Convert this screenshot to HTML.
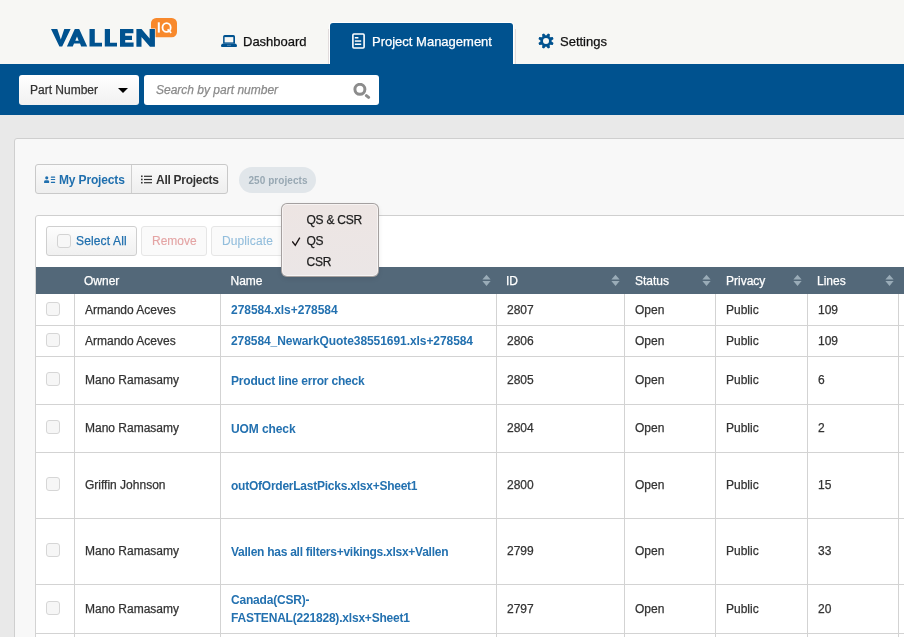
<!DOCTYPE html>
<html><head><meta charset="utf-8">
<style>
*{box-sizing:border-box;margin:0;padding:0}
html,body{width:904px;height:637px;overflow:hidden}
body{font-family:"Liberation Sans",sans-serif;background:#e9e9e9;position:relative;color:#333}
#wrap{position:absolute;left:0;top:0;width:904px;height:637px;will-change:transform;-webkit-text-stroke:0.25px}
.abs{position:absolute}
#top{left:0;top:0;width:904px;height:64px;background:#f7f7f4}
#logo{left:0;top:0}
.tab{position:absolute;top:23px;height:41px;font-size:13px;color:#111;white-space:nowrap}
.tab .t{position:absolute;top:11px}
#t2{left:330px;width:183px;background:#00528f;border-radius:3px 3px 0 0;color:#fff;box-shadow:0 0 0 1px #fff}
#sep1{left:328px;top:29px;width:1px;height:35px;background:#e2dcdc}
#sep2{left:515px;top:29px;width:1px;height:35px;background:#e2dcdc}
#bar{left:0;top:64px;width:904px;height:51px;background:#00528f}
#sel{left:19px;top:75px;width:120px;height:30px;background:linear-gradient(#fff,#f1f1f1);border-radius:3px;font-size:12px;color:#333}
#sel .t{position:absolute;left:11px;top:8px}
#sel .caret{position:absolute;left:118px;top:88px}
#search{left:144px;top:75px;width:235px;height:30px;background:#fff;border-radius:3px;font-size:12px;font-style:italic;color:#8a8a8a}
#search .t{position:absolute;left:12px;top:8px}
#panel{left:14px;top:138px;width:1000px;height:600px;background:#f8f8f8;border:1px solid #cfcfcf;border-radius:3px}
#bg{left:35px;top:164px;width:193px;height:30px;border:1px solid #c9c9c9;border-radius:3px;background:linear-gradient(#fafafa,#eeeeee);font-size:12px;font-weight:bold}
#bg .d{position:absolute;left:95px;top:0;width:1px;height:28px;background:#cfcfcf}
#badge{left:239px;top:167px;width:77px;height:26px;border-radius:13px;background:#e1e6ea;color:#98a8b3;font-size:10px;font-weight:bold;text-align:center;line-height:28px;letter-spacing:0.07px;padding-left:1px}
#box{left:35px;top:215px;width:1000px;height:500px;background:#fff;border:1px solid #cfcfcf;border-radius:3px}
.btn{position:absolute;top:226px;height:30px;border:1px solid #cfcfcf;border-radius:3px;background:linear-gradient(#fdfdfd,#f0f0f0);font-size:12px}
#thead{left:35px;top:267px;width:900px;height:27px;background:#536879;color:#fff;font-size:12px}
.cell{position:absolute;font-size:12px;color:#333;white-space:nowrap}
.row .c.lnk{color:#2371b0;font-weight:bold;letter-spacing:-0.1px}
.hl{position:absolute;left:35px;width:880px;height:1px;background:#d3d3d3}
.vl{position:absolute;top:294px;width:1px;height:343px;background:#d3d3d3}
.cb{position:absolute;left:46px;width:14px;height:14px;border:1px solid #d6d6d6;border-radius:3px;background:#f6f6f6}
.sort{position:absolute;top:274px}
#pop{left:281px;top:203px;width:98px;height:74px;background:linear-gradient(#ede5e3,#ebe6e6);border:1px solid rgba(0,0,0,.3);border-radius:6px;font-size:12px;color:#1d1d1d;box-shadow:inset 0 0 0 1px rgba(255,255,255,.55),0 2px 5px rgba(0,0,0,.08)}
.row{position:absolute;left:35px;width:880px;display:flex;align-items:center}
.row .c{position:absolute;font-size:12px;color:#333;white-space:nowrap;line-height:18px}
.row .cb{left:11px;position:absolute;margin-top:-2px}

#bg span,#badge,.row .c.lnk{-webkit-text-stroke:0}
</style></head><body><div id="wrap">
<div id="top" class="abs"></div>
<svg id="logo" class="abs" width="200" height="64" viewBox="0 0 200 64">
  <g fill="#00528f">
    <polygon points="51,29 57.3,29 60.8,39.5 64.3,29 70.6,29 62.2,46.5 59.4,46.5"/>
    <path d="M66.9,46.5 L74.8,29 L79.2,29 L87.2,46.5 L81.2,46.5 L80,43.6 L74,43.6 L72.8,46.5 Z M75.3,40.8 L78.7,40.8 L77,36.6 Z" fill-rule="evenodd"/>
    <polygon points="89.5,29 94.8,29 94.8,42.8 102,42.8 102,46.5 89.5,46.5"/>
    <polygon points="104.8,29 110,29 110,42.8 117,42.8 117,46.5 104.8,46.5"/>
    <polygon points="120,29 133.4,29 133.4,33.3 125.2,33.3 125.2,35.8 132,35.8 132,40 125.2,40 125.2,42.6 133.6,42.6 133.6,46.7 120,46.7"/>
  </g>
  <rect x="151" y="17.9" width="26" height="19.4" rx="5.2" fill="#f8892c"/>
  <polygon points="136.4,29 141.5,29 149.6,38.5 149.6,29 154.9,29 154.9,46.7 150,46.7 141.5,37 141.5,46.7 136.4,46.7" fill="#00528f" stroke="#f7f7f4" stroke-width="1.2"/><polygon points="136.4,29 141.5,29 149.6,38.5 149.6,29 154.9,29 154.9,46.7 150,46.7 141.5,37 141.5,46.7 136.4,46.7" fill="#00528f"/>
  <rect x="157.8" y="22.3" width="2" height="10.3" fill="#fff"/><ellipse cx="166.6" cy="27.5" rx="4.1" ry="4.4" fill="none" stroke="#fff" stroke-width="1.8"/><line x1="167.6" y1="29.3" x2="171.2" y2="32.8" stroke="#fff" stroke-width="1.7"/>
</svg>

<div class="tab" style="left:214px;width:110px">
  <svg class="abs" style="left:7px;top:12px" width="16" height="12" viewBox="0 0 16 12"><path d="M2.1,8.8 V1.6 Q2.1,0 3.7,0 H12.4 Q14,0 14,1.6 V8.8 Z" fill="#00528f"/><rect x="3.6" y="2.1" width="8.7" height="5.3" fill="#f7f7f4"/><path d="M0.9,8.8 H15.1 L16,10.6 V11 Q16,11.9 15,11.9 H1 Q0,11.9 0,11 V10.6 Z" fill="#00528f"/><rect x="6" y="9.8" width="4" height="0.9" fill="#5a8ab5"/></svg>
  <span class="t" style="left:29px">Dashboard</span>
</div>
<div id="sep1" class="abs"></div>
<div id="t2" class="tab">
  <svg class="abs" style="left:21px;top:10px" width="14" height="16" viewBox="0 0 14 16"><rect x="1.9" y="1" width="11.2" height="14" rx="1" fill="none" stroke="#fff" stroke-width="1.6"/><rect x="3.8" y="4" width="3.6" height="1.5" fill="#fff"/><rect x="3.8" y="7.3" width="6.4" height="1.5" fill="#fff"/><rect x="3.8" y="10.5" width="6.4" height="1.5" fill="#fff"/></svg>
  <span class="t" style="left:42px">Project Management</span>
</div>
<div id="sep2" class="abs"></div>
<div class="tab" style="left:530px;width:100px">
  <svg class="abs" style="left:8px;top:10px" width="16" height="16" viewBox="0 0 16 16"><path d="M8.18,2.60 L10.04,0.47 L11.88,1.24 L11.69,4.06 L11.94,4.31 L14.76,4.12 L15.53,5.96 L13.40,7.82 L13.40,8.18 L15.53,10.04 L14.76,11.88 L11.94,11.69 L11.69,11.94 L11.88,14.76 L10.04,15.53 L8.18,13.40 L7.82,13.40 L5.96,15.53 L4.12,14.76 L4.31,11.94 L4.06,11.69 L1.24,11.88 L0.47,10.04 L2.60,8.18 L2.60,7.82 L0.47,5.96 L1.24,4.12 L4.06,4.31 L4.31,4.06 L4.12,1.24 L5.96,0.47 L7.82,2.60 Z M11,8 A3,3 0 1,0 5,8 A3,3 0 1,0 11,8 Z" fill="#00528f" fill-rule="evenodd"/></svg>
  <span class="t" style="left:30px">Settings</span>
</div>

<div id="bar" class="abs"></div>
<div id="sel" class="abs"><span class="t">Part Number</span>
  <svg class="abs" style="left:99px;top:13px" width="10" height="5"><polygon points="0,0 10,0 5,5" fill="#000"/></svg>
</div>
<div id="search" class="abs"><span class="t">Search by part number</span>
  <svg class="abs" style="left:209px;top:8px" width="18" height="16" viewBox="0 0 18 16"><circle cx="6.9" cy="6.3" r="5" fill="none" stroke="#8c8c8c" stroke-width="3"/><line x1="13.4" y1="12.6" x2="15.6" y2="14.4" stroke="#8c8c8c" stroke-width="3" stroke-linecap="round"/></svg>
</div>

<div id="panel" class="abs"></div>
<div id="bg" class="abs">
  <svg class="abs" style="left:8px;top:11px" width="12" height="8" viewBox="0 0 12 8"><g fill="#1f6fae"><circle cx="2.75" cy="1.85" r="1.55"/><path d="M0.1,6.9 V5.6 Q0.1,4.2 1.6,4.2 H3.6 Q5.1,4.2 5.1,5.6 V6.9 Z"/><rect x="6.8" y="0.6" width="4.4" height="1.2" rx="0.4"/><rect x="6.8" y="2.9" width="4.4" height="1.2" rx="0.4"/><rect x="6.8" y="5.8" width="4.4" height="1.2" rx="0.4"/></g></svg>
  <span class="abs" style="left:23px;top:8px;color:#1f6fae;letter-spacing:-0.15px">My Projects</span>
  <div class="d"></div>
  <svg class="abs" style="left:105px;top:10px" width="11" height="9" viewBox="0 0 11 9"><g fill="#333"><rect x="0" y="0.5" width="1.6" height="1.6"/><rect x="0" y="3.7" width="1.6" height="1.6"/><rect x="0" y="6.9" width="1.6" height="1.6"/><rect x="3" y="0.7" width="8" height="1.2"/><rect x="3" y="3.9" width="8" height="1.2"/><rect x="3" y="7.1" width="8" height="1.2"/></g></svg>
  <span class="abs" style="left:120px;top:8px;color:#333;letter-spacing:-0.28px">All Projects</span>
</div>
<div id="badge" class="abs">250 projects</div>

<div id="box" class="abs"></div>
<div class="btn" style="left:46px;width:91px">
  <div class="abs" style="left:10px;top:7px;width:14px;height:14px;border:1px solid #d3d3d3;border-radius:3px;background:#f7f7f7"></div>
  <span class="abs" style="left:29px;top:7px;color:#1f6fae;letter-spacing:0.15px">Select All</span>
</div>
<div class="btn" style="left:141px;width:66px;border-color:#e6e6e6;background:#fafafa">
  <span class="abs" style="left:10px;top:7px;color:#e4a4a4;-webkit-text-stroke:0.1px">Remove</span>
</div>
<div class="btn" style="left:211px;width:80px;border-color:#e6e6e6;background:#fafafa">
  <span class="abs" style="left:10px;top:7px;color:#93bedc;-webkit-text-stroke:0.1px;letter-spacing:0.1px">Duplicate</span>
</div>

<div id="thead" class="abs">
  <span class="abs" style="left:49px;top:7px">Owner</span>
  <span class="abs" style="left:195.5px;top:7px">Name</span>
  <span class="abs" style="left:471px;top:7px">ID</span>
  <span class="abs" style="left:600px;top:7px">Status</span>
  <span class="abs" style="left:691px;top:7px">Privacy</span>
  <span class="abs" style="left:782px;top:7px">Lines</span>
</div>
<div class="row" style="top:294px;height:31px;padding-bottom:0px">
<div class="cb"></div>
<span class="c" style="left:50px">Armando Aceves</span>
<span class="c lnk" style="left:196px;letter-spacing:-0.03px;margin-top:0px">278584.xls+278584</span>
<span class="c" style="left:472px">2807</span>
<span class="c" style="left:600px">Open</span>
<span class="c" style="left:691px">Public</span>
<span class="c" style="left:783px">109</span>
</div>
<div class="hl" style="top:325px"></div>
<div class="row" style="top:326px;height:30px;padding-bottom:0px">
<div class="cb"></div>
<span class="c" style="left:50px">Armando Aceves</span>
<span class="c lnk" style="left:196px;letter-spacing:-0.07px;margin-top:0px">278584_NewarkQuote38551691.xls+278584</span>
<span class="c" style="left:472px">2806</span>
<span class="c" style="left:600px">Open</span>
<span class="c" style="left:691px">Public</span>
<span class="c" style="left:783px">109</span>
</div>
<div class="hl" style="top:356px"></div>
<div class="row" style="top:357px;height:47px;padding-bottom:2px">
<div class="cb"></div>
<span class="c" style="left:50px">Mano Ramasamy</span>
<span class="c lnk" style="left:196px;letter-spacing:-0.19px;margin-top:2px">Product line error check</span>
<span class="c" style="left:472px">2805</span>
<span class="c" style="left:600px">Open</span>
<span class="c" style="left:691px">Public</span>
<span class="c" style="left:783px">6</span>
</div>
<div class="hl" style="top:404px"></div>
<div class="row" style="top:405px;height:47px;padding-bottom:2px">
<div class="cb"></div>
<span class="c" style="left:50px">Mano Ramasamy</span>
<span class="c lnk" style="left:196px;letter-spacing:-0.1px;margin-top:2px">UOM check</span>
<span class="c" style="left:472px">2804</span>
<span class="c" style="left:600px">Open</span>
<span class="c" style="left:691px">Public</span>
<span class="c" style="left:783px">2</span>
</div>
<div class="hl" style="top:452px"></div>
<div class="row" style="top:453px;height:65px;padding-bottom:2px">
<div class="cb"></div>
<span class="c" style="left:50px">Griffin Johnson</span>
<span class="c lnk" style="left:196px;letter-spacing:-0.24px;margin-top:2px">outOfOrderLastPicks.xlsx+Sheet1</span>
<span class="c" style="left:472px">2800</span>
<span class="c" style="left:600px">Open</span>
<span class="c" style="left:691px">Public</span>
<span class="c" style="left:783px">15</span>
</div>
<div class="hl" style="top:518px"></div>
<div class="row" style="top:519px;height:65px;padding-bottom:2px">
<div class="cb"></div>
<span class="c" style="left:50px">Mano Ramasamy</span>
<span class="c lnk" style="left:196px;letter-spacing:-0.26px;margin-top:2px">Vallen has all filters+vikings.xlsx+Vallen</span>
<span class="c" style="left:472px">2799</span>
<span class="c" style="left:600px">Open</span>
<span class="c" style="left:691px">Public</span>
<span class="c" style="left:783px">33</span>
</div>
<div class="hl" style="top:584px"></div>
<div class="row" style="top:585px;height:48px;padding-bottom:0px">
<div class="cb"></div>
<span class="c" style="left:50px">Mano Ramasamy</span>
<span class="c lnk" style="left:196px;letter-spacing:-0.2px;margin-top:0px">Canada(CSR)-<br>FASTENAL(221828).xlsx+Sheet1</span>
<span class="c" style="left:472px">2797</span>
<span class="c" style="left:600px">Open</span>
<span class="c" style="left:691px">Public</span>
<span class="c" style="left:783px">20</span>
</div>
<div class="hl" style="top:633px"></div>
<div class="vl" style="left:74px"></div>
<div class="vl" style="left:220px"></div>
<div class="vl" style="left:496px"></div>
<div class="vl" style="left:624px"></div>
<div class="vl" style="left:715px"></div>
<div class="vl" style="left:807px"></div>
<div class="vl" style="left:898px"></div>
<div class="vl" style="left:35px;top:267px;height:370px"></div>
<svg class="sort" style="left:482.0px" width="9" height="12" viewBox="0 0 9 12"><polygon points="0.4,5.4 8.6,5.4 4.5,0.8" fill="#9aacb8"/><polygon points="0.4,7 8.6,7 4.5,11.9" fill="#9aacb8"/></svg>
<svg class="sort" style="left:610.5px" width="9" height="12" viewBox="0 0 9 12"><polygon points="0.4,5.4 8.6,5.4 4.5,0.8" fill="#9aacb8"/><polygon points="0.4,7 8.6,7 4.5,11.9" fill="#9aacb8"/></svg>
<svg class="sort" style="left:702.0px" width="9" height="12" viewBox="0 0 9 12"><polygon points="0.4,5.4 8.6,5.4 4.5,0.8" fill="#9aacb8"/><polygon points="0.4,7 8.6,7 4.5,11.9" fill="#9aacb8"/></svg>
<svg class="sort" style="left:793.0px" width="9" height="12" viewBox="0 0 9 12"><polygon points="0.4,5.4 8.6,5.4 4.5,0.8" fill="#9aacb8"/><polygon points="0.4,7 8.6,7 4.5,11.9" fill="#9aacb8"/></svg>
<svg class="sort" style="left:885.0px" width="9" height="12" viewBox="0 0 9 12"><polygon points="0.4,5.4 8.6,5.4 4.5,0.8" fill="#9aacb8"/><polygon points="0.4,7 8.6,7 4.5,11.9" fill="#9aacb8"/></svg>
<div id="pop" class="abs">
  <span class="abs" style="left:24.5px;top:9px;letter-spacing:-0.25px">QS &amp; CSR</span>
  <svg class="abs" style="left:10px;top:33px" width="10" height="10" viewBox="0 0 10 10"><path d="M0.3,4.4 L3.3,8.4 L7.8,0.6" fill="none" stroke="#1a1414" stroke-width="1.35"/></svg>
  <span class="abs" style="left:24.5px;top:30px;letter-spacing:-0.25px">QS</span>
  <span class="abs" style="left:24.5px;top:51px;letter-spacing:-0.25px">CSR</span>
</div>
</div></body></html>
